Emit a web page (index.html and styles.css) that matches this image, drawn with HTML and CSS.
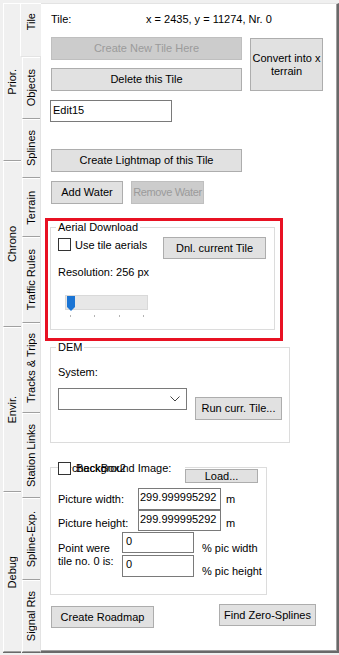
FILE: index.html
```html
<!DOCTYPE html>
<html>
<head>
<meta charset="utf-8">
<link rel="stylesheet" href="styles.css">
</head>
<body>
<div class="app">
  <div class="otabs">
    <div class="otab t-prior"><span class="vt">Prior.</span></div>
    <div class="otab t-chrono"><span class="vt">Chrono</span></div>
    <div class="otab t-envir"><span class="vt">Envir.</span></div>
    <div class="otab t-debug"><span class="vt">Debug</span></div>
  </div>
  <div class="itabs">
    <div class="itab t-tile sel"><span class="vt">Tile</span></div>
    <div class="itab t-objects"><span class="vt">Objects</span></div>
    <div class="itab t-splines"><span class="vt">Splines</span></div>
    <div class="itab t-terrain"><span class="vt">Terrain</span></div>
    <div class="itab t-traffic"><span class="vt">Traffic Rules</span></div>
    <div class="itab t-tracks"><span class="vt">Tracks &amp; Trips</span></div>
    <div class="itab t-station"><span class="vt">Station Links</span></div>
    <div class="itab t-splexp"><span class="vt">Spline-Exp.</span></div>
    <div class="itab t-signal"><span class="vt">Signal Rts</span></div>
  </div>
  <div class="panel">
    <div class="row-tile">
      <span class="tile-lbl">Tile:</span>
      <span>x = 2435, y = 11274, Nr. 0</span>
    </div>
    <div class="tile-actions">
      <div class="tile-col">
        <button class="btn dis w191">Create New Tile Here</button>
        <button class="btn w191 gap8">Delete this Tile</button>
      </div>
      <button class="btn convert">Convert into x<br>terrain</button>
    </div>
    <div class="tb edit15">Edit15</div>
    <button class="btn w191 lightmap">Create Lightmap of this Tile</button>
    <div class="water-row">
      <button class="btn addw">Add Water</button>
      <button class="btn dis remw">Remove Water</button>
    </div>
    <div class="hl">
      <div class="grp aerial">
        <div class="grp-title">Aerial Download</div>
        <div class="aer-row">
          <div class="cbitem"><span class="cb"></span><span>Use tile aerials</span></div>
          <button class="btn dnl">Dnl. current Tile</button>
        </div>
        <div class="res">Resolution: 256 px</div>
        <div class="slider">
          <svg class="thumb" width="8" height="16" viewBox="0 0 8 16"><path d="M0 0H8V11L4 15L0 11Z" fill="#1a74d4"/></svg>
        </div>
        <div class="ticks"><i class="tick"></i><i class="tick"></i><i class="tick"></i><i class="tick"></i></div>
      </div>
    </div>
    <div class="grp dem">
      <div class="grp-title">DEM</div>
      <div class="sys">System:</div>
      <div class="dem-row">
        <div class="combo">
          <svg width="10" height="6" viewBox="0 0 10 6"><path d="M0.5 0.5L5 5L9.5 0.5" fill="none" stroke="#444" stroke-width="1"/></svg>
        </div>
        <button class="btn run">Run curr. Tile...</button>
      </div>
    </div>
    <div class="grp bgimg">
      <div class="bg-head">
        <span class="cb"></span>
        <span class="bg-lbl"><span class="ghost">checkBox2</span><span class="bg-text">Background Image:</span></span>
        <button class="btn load">Load...</button>
      </div>
      <div class="pic-row">
        <span class="pic-lbl">Picture width:</span>
        <div class="tb num h22">299.999995292</div>
        <span class="unit">m</span>
      </div>
      <div class="pic-row">
        <span class="pic-lbl lower">Picture height:</span>
        <div class="tb num h21">299.999995292</div>
        <span class="unit lower">m</span>
      </div>
      <div class="pt-row">
        <div class="pt-lbl">Point were<br>tile no. 0 is:</div>
        <div class="pt-boxes">
          <div class="tb zero h21">0</div>
          <div class="tb zero h22 second">0</div>
        </div>
        <div class="pt-pct">
          <div>% pic width</div>
          <div class="pct2">% pic height</div>
        </div>
      </div>
    </div>
    <div class="bottom-row">
      <button class="btn roadmap">Create Roadmap</button>
      <button class="btn zero-spl">Find Zero-Splines</button>
    </div>
  </div>
</div>
</body>
</html>
```
FILE: styles.css
```css
* { box-sizing: border-box; }
body {
  margin: 0;
  background: #f0f0f0;
  font: 11px "Liberation Sans", Arial, sans-serif;
  color: #000;
}
.app { display: flex; width: 339px; height: 655px; overflow: hidden; }

/* vertical tabs */
.vt {
  writing-mode: vertical-rl;
  transform: rotate(180deg);
  white-space: nowrap;
  line-height: 13px;
}
.otabs { width: 21px; padding-top: 3px; display: flex; flex-direction: column; flex: none; }
.otab {
  margin-left: 3px;
  display: flex; align-items: center; justify-content: center;
  border-left: 1px solid #fff;
  border-top: 1px solid #fff;
  border-bottom: 1px solid #a0a0a0;
  box-shadow: 0 1px 0 #696969;
  flex: none;
}
.t-prior { height: 158px; }
.t-chrono { height: 166px; }
.t-envir { height: 165px; }
.t-debug { height: 160px; }

.itabs { width: 19px; padding-top: 3px; display: flex; flex-direction: column; flex: none; }
.itab {
  margin-left: 1px;
  display: flex; align-items: center; justify-content: center;
  border-left: 1px solid #fff;
  border-top: 1px solid #fff;
  border-bottom: 1px solid #a0a0a0;
  box-shadow: 0 1px 0 #696969;
  flex: none;
}
.itab.sel {
  margin-left: -1px; margin-right: -1px;
  position: relative; z-index: 1;
  background: #f0f0f0;
  padding-bottom: 16px;
  box-shadow: none;
  border-bottom-color: #e3e3e3;
}
.t-tile { height: 54px; }
.t-objects { height: 62px; }
.t-splines { height: 59px; }
.t-terrain { height: 59px; }
.t-traffic { height: 86px; }
.t-tracks { height: 90px; }
.t-station { height: 85px; }
.t-splexp { height: 82px; }
.t-signal { height: 72px; }

/* panel */
.panel {
  flex: none;
  width: 299px; height: 650px;
  margin-top: 3px;
  background: #fff;
  border-top: 1px solid #e3e3e3;
  border-left: 1px solid #e3e3e3;
  border-right: 2px solid #696969;
  border-bottom: 2px solid #696969;
  box-shadow: inset -1px -1px 0 #a0a0a0;
  padding-left: 10px;
}

.btn {
  display: flex; align-items: center; justify-content: center;
  background: #e1e1e1;
  border: 1px solid #adadad;
  font: inherit; color: #000;
  padding: 0; margin: 0;
  line-height: 13px;
  text-align: center;
  white-space: nowrap;
}
.btn.dis { background: #cccccc; border-color: #bfbfbf; color: #9b9b9b; }

.tb { border: 1px solid #7a7a7a; background: #fff; line-height: 13px; }

.row-tile { margin-top: 9px; line-height: 12px; display: flex; }
.tile-lbl { width: 95px; }

.tile-actions { margin-top: 12px; display: flex; }
.tile-col { display: flex; flex-direction: column; }
.w191 { width: 191px; height: 23px; }
.gap8 { margin-top: 8px; }
.convert { width: 73px; height: 53px; margin: 1px 0 0 8px; white-space: normal; }

.edit15 { margin: 9px 0 0 -1px; width: 122px; height: 22px; padding: 3px 0 0 2px; }
.lightmap { margin-top: 27px; }

.water-row { margin-top: 9px; display: flex; }
.addw { width: 72px; height: 23px; }
.remw { width: 73px; height: 23px; margin-left: 8px; letter-spacing: -0.35px; overflow: hidden; }

.hl {
  margin: 14px 0 0 -6px;
  width: 238px; height: 123px;
  border: 3px solid #e81123;
  padding: 6px 0 0 2px;
}

.grp { border: 1px solid #dcdcdc; padding-left: 7px; }
.grp-title {
  width: max-content;
  margin: -7px 0 0 -2px;
  padding: 0 2px;
  background: #fff;
  line-height: 12px;
}

.aerial { width: 225px; height: 103px; }
.aer-row { margin-top: 4px; display: flex; }
.cbitem { width: 105px; height: 15px; display: flex; align-items: center; gap: 4px; }
.cb { display: block; flex: none; width: 13px; height: 13px; border: 1px solid #333; background: #fff; }
.dnl { width: 103px; height: 22px; }
.res { margin-top: 7px; line-height: 12px; }
.slider {
  margin: 17px 0 0 7px;
  width: 83px; height: 15px;
  background: #e7e7e7;
  border: 1px solid #d9d9d9;
}
.thumb { display: block; margin: 0 0 0 1px; }
.ticks {
  display: flex; justify-content: space-between;
  width: 83px; height: 2px;
  margin: 5px 0 0 7px;
  padding: 0 4px 0 5px;
}
.tick { display: block; width: 1px; height: 2px; background: #b4b4b4; }

.dem { margin: 6px 0 0 -1px; width: 240px; height: 96px; }
.sys { margin-top: 13px; line-height: 12px; }
.dem-row { margin-top: 10px; display: flex; }
.combo {
  width: 129px; height: 22px;
  border: 1px solid #7a7a7a; background: #fff;
  display: flex; align-items: center; justify-content: flex-end;
  padding-right: 6px;
}
.combo svg { display: block; }
.run { width: 87px; height: 23px; margin: 9px 0 0 8px; }

.bgimg { margin: 24px 0 0 -1px; width: 217px; height: 128px; }
.bg-head { margin-top: -6px; display: flex; align-items: flex-start; }
.bg-lbl { position: relative; width: 113px; margin-left: 1px; line-height: 13px; background: #fff; white-space: nowrap; }
.ghost { position: absolute; left: 0; top: 0; }
.bg-text { padding-left: 4px; }
.load { width: 73px; height: 14px; margin-top: 7px; line-height: 12px; }

.pic-row { display: flex; align-items: center; }
.bg-head + .pic-row { margin-top: 5px; }
.pic-lbl { width: 80px; }
.lower { padding-top: 4px; }
.num { width: 83px; padding: 2px 0 0 1px; }
.h22 { height: 22px; }
.h21 { height: 21px; }
.unit { margin-left: 5px; }

.pt-row { margin-top: 1px; display: flex; }
.pt-lbl { width: 64px; padding-top: 10px; line-height: 13px; }
.pt-boxes { display: flex; flex-direction: column; }
.zero { width: 72px; padding: 2px 0 0 3px; }
.second { margin-top: 2px; }
.pt-pct { margin-left: 8px; padding-top: 10px; line-height: 13px; }
.pct2 { margin-top: 10px; }

.bottom-row { margin-top: 9px; display: flex; align-items: flex-start; }
.roadmap { width: 103px; height: 22px; margin-top: 2px; }
.zero-spl { width: 97px; height: 22px; margin-left: 65px; }
```
